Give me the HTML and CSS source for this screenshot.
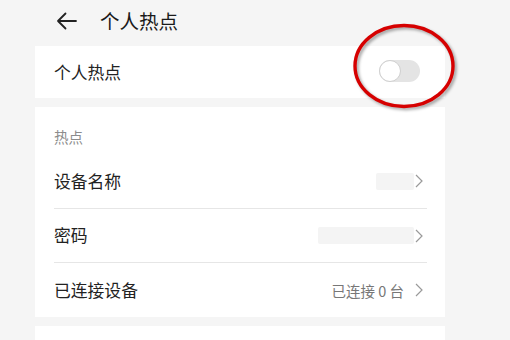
FILE: index.html
```html
<!DOCTYPE html>
<html lang="zh">
<head>
<meta charset="utf-8">
<link rel="stylesheet" href="styles.css">
</head>
<body>
<div class="page">
  <header class="topbar">
    <svg class="back" width="21" height="18" viewBox="0 0 21 18"><path d="M20 9H2M9.5 1.5L2 9l7.5 7.5" fill="none" stroke="#222" stroke-width="1.8" stroke-linecap="round" stroke-linejoin="round"/></svg>
    <h1 class="title">个人热点</h1>
  </header>
  <section class="card card-switch">
    <span class="row-label">个人热点</span>
    <span class="toggle"><span class="knob"></span></span>
  </section>
  <section class="card card-list">
    <div class="section-label">热点</div>
    <div class="row">
      <span class="row-label">设备名称</span>
      <span class="row-value"><span class="blur blur-name"></span><svg class="chev" width="8" height="14" viewBox="0 0 8 14"><path d="M1 1l6 6-6 6" fill="none" stroke="#9a9a9a" stroke-width="1.2"/></svg></span>
    </div>
    <div class="row">
      <span class="row-label">密码</span>
      <span class="row-value"><span class="blur blur-pass"></span><svg class="chev" width="8" height="14" viewBox="0 0 8 14"><path d="M1 1l6 6-6 6" fill="none" stroke="#9a9a9a" stroke-width="1.2"/></svg></span>
    </div>
    <div class="row">
      <span class="row-label">已连接设备</span>
      <span class="row-value"><span class="value-text">已连接 0 台</span><svg class="chev" width="8" height="14" viewBox="0 0 8 14"><path d="M1 1l6 6-6 6" fill="none" stroke="#9a9a9a" stroke-width="1.2"/></svg></span>
    </div>
  </section>
  <section class="card card-bottom"></section>
  <svg class="mark" width="110" height="92" viewBox="0 0 110 92"><ellipse cx="53" cy="44" rx="49" ry="40.5" fill="none" stroke="#d60000" stroke-width="3.4"/></svg>
</div>
</body>
</html>
```
FILE: styles.css
```css
* { box-sizing: border-box; margin: 0; padding: 0; }
html, body { width: 510px; height: 340px; overflow: hidden; }
body {
  background: #f5f5f5;
  font-family: "Noto Sans CJK SC", "Noto Sans", sans-serif;
  color: #1f1f1f;
}
.page {
  position: relative;
  width: 410px;
  margin-left: 35px;
}
.topbar {
  height: 46px;
  display: flex;
  align-items: center;
  padding-left: 21px;
  padding-bottom: 5px;
}
.back { display: block; }
.title {
  font-size: 19.5px;
  font-weight: 400;
  margin-left: 23px;
  line-height: 1;
  color: #1a1a1a;
}
.card { background: #fff; }
.card-switch {
  height: 52px;
  display: flex;
  align-items: center;
  justify-content: space-between;
  padding: 0 25px 0 19px;
}
.row-label { font-size: 16.8px; line-height: 1; color: #222; }
.toggle {
  width: 41px;
  height: 22px;
  border-radius: 11px;
  background: #e4e4e4;
  position: relative;
  display: block;
  margin-top: -2px;
}
.knob {
  position: absolute;
  left: 0;
  top: 0;
  width: 22px;
  height: 22px;
  border-radius: 50%;
  background: #fff;
  border: 1px solid #cfcfcf;
}
.card-list { margin-top: 9px; }
.section-label {
  height: 47px;
  padding: 12px 0 0 19px;
  display: flex;
  align-items: center;
  font-size: 14.5px;
  color: #8c8c8c;
}
.row {
  height: 54px;
  margin: 0 18px 0 19px;
  display: flex;
  align-items: center;
  justify-content: space-between;
  border-top: 1px solid #e6e6e6;
}
.row:nth-of-type(2) { border-top: none; }
.row:last-child { height: 55px; }
.row-value { display: flex; align-items: center; }
.blur { display: block; height: 17px; background: #f4f4f4; border-radius: 2px; }
.blur-name { width: 38px; }
.blur-pass { width: 96px; }
.value-text { font-size: 14.5px; color: #777; margin-right: 10px; }
.chev { display: block; margin-right: 4px; margin-left: 1px; }
.card-bottom { margin-top: 9px; height: 30px; }
.mark {
  position: absolute;
  left: 316px;
  top: 22px;
  filter: drop-shadow(2px 2px 1.5px rgba(0,0,0,0.35));
}
```
